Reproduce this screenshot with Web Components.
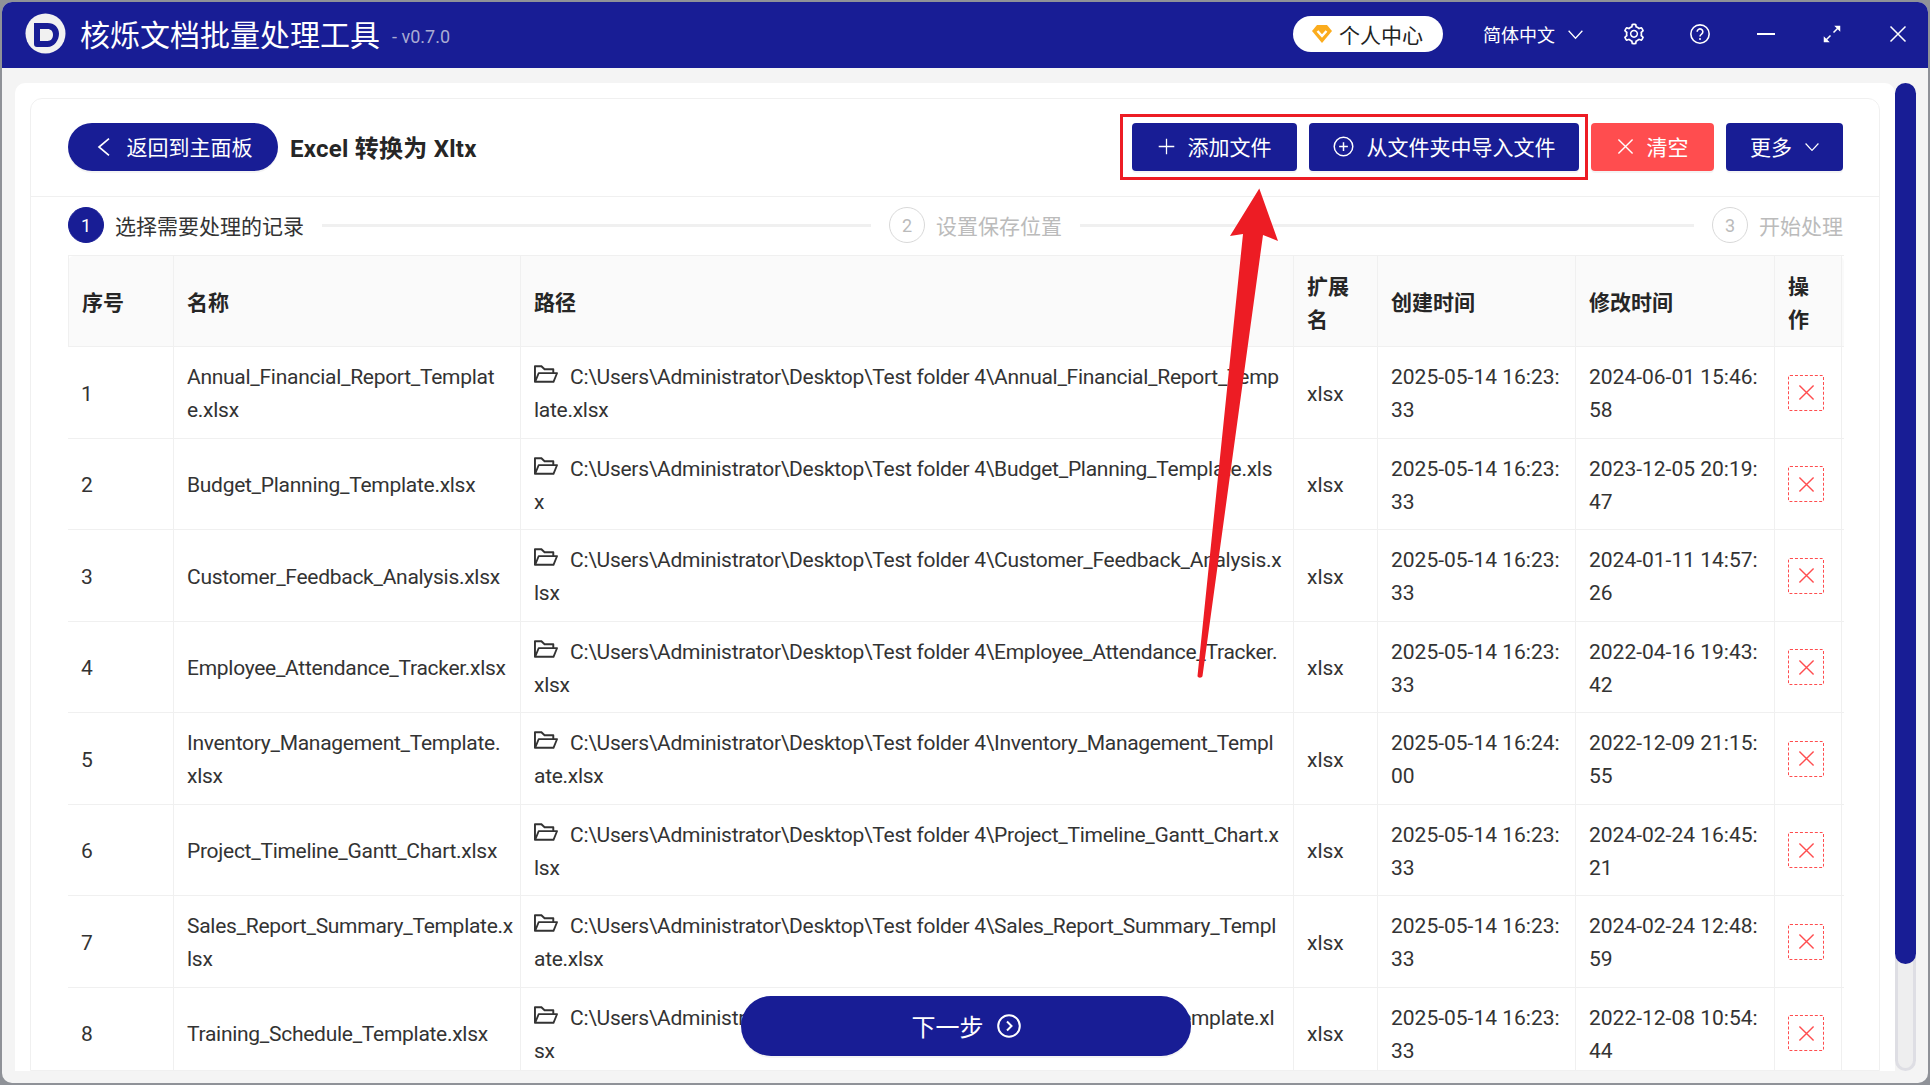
<!DOCTYPE html>
<html lang="zh">
<head>
<meta charset="utf-8">
<title>核烁文档批量处理工具</title>
<style>
  html, body { margin: 0; height: 100%; overflow: hidden; }
  body {
    background: #8f9298;
    font-family: Roboto, "Noto Sans CJK SC", sans-serif;
    color: #333;
  }
</style>
</head>
<body>
<app-window>
  <title-bar slot="top"></title-bar>
  <tool-bar></tool-bar>
  <step-bar></step-bar>
  <file-table>
    <file-row no="1" name="Annual_Financial_Report_Templat|e.xlsx" path="Annual_Financial_Report_Temp|late.xlsx" created="2025-05-14 16:23:|33" modified="2024-06-01 15:46:|58"></file-row>
    <file-row no="2" name="Budget_Planning_Template.xlsx" path="Budget_Planning_Template.xls|x" created="2025-05-14 16:23:|33" modified="2023-12-05 20:19:|47"></file-row>
    <file-row no="3" name="Customer_Feedback_Analysis.xlsx" path="Customer_Feedback_Analysis.x|lsx" created="2025-05-14 16:23:|33" modified="2024-01-11 14:57:|26"></file-row>
    <file-row no="4" name="Employee_Attendance_Tracker.xlsx" path="Employee_Attendance_Tracker.|xlsx" created="2025-05-14 16:23:|33" modified="2022-04-16 19:43:|42"></file-row>
    <file-row no="5" name="Inventory_Management_Template.|xlsx" path="Inventory_Management_Templ|ate.xlsx" created="2025-05-14 16:24:|00" modified="2022-12-09 21:15:|55"></file-row>
    <file-row no="6" name="Project_Timeline_Gantt_Chart.xlsx" path="Project_Timeline_Gantt_Chart.x|lsx" created="2025-05-14 16:23:|33" modified="2024-02-24 16:45:|21"></file-row>
    <file-row no="7" name="Sales_Report_Summary_Template.x|lsx" path="Sales_Report_Summary_Templ|ate.xlsx" created="2025-05-14 16:23:|33" modified="2024-02-24 12:48:|59"></file-row>
    <file-row no="8" name="Training_Schedule_Template.xlsx" path="Training_Schedule_Template.xl|sx" created="2025-05-14 16:23:|33" modified="2022-12-08 10:54:|44"></file-row>
  </file-table>
  <next-button slot="over"></next-button>
</app-window>
<annotation-layer></annotation-layer>

<script>
const NAVY = '#181d95';
const FONT = 'Roboto, "Noto Sans CJK SC", sans-serif';

// thin icons, all on a 24 box except the ones with their own viewBox
const ICONS = {
  left: '<path d="M18 2 6 12l12 10" fill="none" stroke="currentColor" stroke-width="2"/>',
  down: '<path d="M1 6l11 12L23 6" fill="none" stroke="currentColor" stroke-width="2"/>',
  plus: '<path d="M12 1v22M1 12h22" stroke="currentColor" stroke-width="1.8"/>',
  close: '<path d="M2 2l20 20M22 2 2 22" stroke="currentColor" stroke-width="2"/>',
  plusCircle: '<circle cx="12" cy="12" r="10.6" fill="none" stroke="currentColor" stroke-width="1.7"/><path d="M12 7v10M7 12h10" stroke="currentColor" stroke-width="1.7"/>',
  rightCircle: '<circle cx="12" cy="12" r="10.8" fill="none" stroke="currentColor" stroke-width="2"/><path d="M10 7.5l4.5 4.5-4.5 4.5" fill="none" stroke="currentColor" stroke-width="2"/>',
  help: '<circle cx="12" cy="12" r="11" fill="none" stroke="currentColor" stroke-width="1.9"/><path d="M8.6 9.3a3.4 3.4 0 1 1 5.3 2.8c-1.3.9-1.9 1.5-1.9 2.9" fill="none" stroke="currentColor" stroke-width="1.9"/><circle cx="12" cy="18" r="1.2" fill="currentColor"/>',
  minus: '<path d="M0 12h24" stroke="currentColor" stroke-width="2.4"/>',
  expand: '<path d="M14 10l8-8M10 14l-8 8" stroke="currentColor" stroke-width="2"/><path d="M15 1h8v8zM9 23H1v-8z" fill="currentColor"/>'
};

function icon(name, size) {
  return `<svg width="${size}" height="${size}" viewBox="0 0 24 24" style="display:block;flex:none" aria-hidden="true">${ICONS[name]}</svg>`;
}

class AppWindow extends HTMLElement {
  constructor() {
    super();
    this.attachShadow({ mode: 'open' }).innerHTML = `
      <style>
        :host {
          display: flex;
          flex-direction: column;
          position: absolute;
          inset: 2px;
          border-radius: 10px;
          overflow: hidden;
          background: #f4f4f4;
        }
        .main {
          flex: 1;
          min-height: 0;
          display: flex;
          padding: 15px 12px 12px 13px;
          position: relative;
        }
        .sheet {
          flex: 1;
          min-width: 0;
          background: #fff;
          border-radius: 10px 10px 0 0;
          padding: 15px 15px 0;
          overflow: hidden;
        }
        .card {
          border: 1px solid #f0f0f0;
          border-radius: 12px 12px 0 0;
          padding: 0 36px 0 37px;
          height: 100%;
          box-sizing: border-box;
        }
        .track {
          width: 21px;
          flex: none;
          background: #eeeeef;
          box-sizing: border-box;
          border: 3px solid #dedee4;
          border-top: 0;
          border-radius: 11px;
          position: relative;
        }
        .thumb {
          position: absolute;
          left: -3px;
          right: -3px;
          top: 0;
          height: 881px;
          background: ${NAVY};
          border-radius: 11px;
        }
      </style>
      <slot name="top"></slot>
      <div class="main">
        <div class="sheet"><div class="card"><slot></slot></div></div>
        <div class="track"><div class="thumb"></div></div>
        <slot name="over"></slot>
      </div>
    `;
  }
}

class TitleBar extends HTMLElement {
  constructor() {
    super();
    const gear = 'M924.8 625.7l-65.5-56c3.1-19 4.7-38.4 4.7-57.8s-1.6-38.8-4.7-57.8l65.5-56a32.03 32.03 0 0 0 9.3-35.2l-.9-2.6a443.74 443.74 0 0 0-79.7-137.9l-1.8-2.1a32.12 32.12 0 0 0-35.1-9.5l-81.3 28.9c-30-24.6-63.5-44-99.7-57.6l-15.7-85a32.05 32.05 0 0 0-25.8-25.7l-2.7-.5c-52.1-9.4-106.9-9.4-159 0l-2.7.5a32.05 32.05 0 0 0-25.8 25.7l-15.8 85.4a351.86 351.86 0 0 0-99 57.4l-81.9-29.1a32 32 0 0 0-35.1 9.5l-1.8 2.1a446.02 446.02 0 0 0-79.7 137.9l-.9 2.6c-4.5 12.5-.8 26.5 9.3 35.2l66.3 56.6c-3.1 18.8-4.6 38-4.6 57.1 0 19.2 1.5 38.4 4.6 57.1L99 625.5a32.03 32.03 0 0 0-9.3 35.2l.9 2.6c18.1 50.4 44.9 96.9 79.7 137.9l1.8 2.1a32.12 32.12 0 0 0 35.1 9.5l81.9-29.1c29.8 24.5 63.1 43.9 99 57.4l15.8 85.4a32.05 32.05 0 0 0 25.8 25.7l2.7.5a449.4 449.4 0 0 0 159 0l2.7-.5a32.05 32.05 0 0 0 25.8-25.7l15.7-85a350 350 0 0 0 99.7-57.6l81.3 28.9a32 32 0 0 0 35.1-9.5l1.8-2.1c34.8-41.1 61.6-87.5 79.7-137.9l.9-2.6c4.5-12.3.8-26.3-9.3-35zM788.3 465.9c2.5 15.1 3.8 30.6 3.8 46.1s-1.3 31-3.8 46.1l-6.6 40.1 74.7 63.9a370.03 370.03 0 0 1-42.6 73.6L721 702.8l-31.4 25.8c-23.9 19.6-50.5 35-79.3 45.8l-38.1 14.3-17.9 97a377.5 377.5 0 0 1-85 0l-17.9-97.2-37.8-14.5c-28.5-10.8-55-26.2-78.7-45.7l-31.4-25.9-93.4 33.2c-17-22.9-31.2-47.6-42.6-73.6l75.5-64.5-6.5-40c-2.4-14.9-3.7-30.3-3.7-45.5 0-15.3 1.2-30.6 3.7-45.5l6.5-40-75.5-64.5c11.3-26.1 25.6-50.7 42.6-73.6l93.4 33.2 31.4-25.9c23.7-19.5 50.2-34.9 78.7-45.7l37.9-14.3 17.9-97.2c28.1-3.2 56.8-3.2 85 0l17.9 97 38.1 14.3c28.7 10.8 55.4 26.2 79.3 45.8l31.4 25.8 92.8-32.9c17 22.9 31.2 47.6 42.6 73.6L781.8 426l6.5 39.9zM512 326c-97.2 0-176 78.8-176 176s78.8 176 176 176 176-78.8 176-176-78.8-176-176-176zm79.2 255.2A111.6 111.6 0 0 1 512 614c-29.9 0-58-11.7-79.2-32.8A111.6 111.6 0 0 1 400 502c0-29.9 11.7-58 32.8-79.2C454 401.6 482.1 390 512 390c29.9 0 58 11.6 79.2 32.8A111.6 111.6 0 0 1 624 502c0 29.9-11.7 58-32.8 79.2z';
    this.attachShadow({ mode: 'open' }).innerHTML = `
      <style>
        :host {
          display: flex;
          align-items: center;
          flex: none;
          height: 66px;
          background: ${NAVY};
          color: #fff;
          padding: 0 20px 0 23px;
          font-family: ${FONT};
        }
        .logo { display: block; flex: none; margin-top: -3px; }
        h1 { margin: 1px 0 0 14px; font-size: 30px; font-weight: 400; line-height: 1; white-space: nowrap; }
        .ver { margin-left: 12px; font-size: 18px; color: #a9abd3; white-space: nowrap; position: relative; top: 1px; }
        .space { flex: 1; }
        .pill {
          display: flex;
          align-items: center;
          gap: 7px;
          width: 150px;
          height: 36px;
          box-sizing: border-box;
          padding-left: 19px;
          margin-top: -2px;
          background: #fff;
          border-radius: 18px;
          color: #222;
          font-size: 21px;
        }
        .lang {
          display: flex;
          align-items: center;
          gap: 13px;
          margin-left: 40px;
          margin-right: 41px;
          margin-top: -2px;
          font-size: 18px;
        }
        .icons { display: flex; align-items: center; gap: 46px; margin-top: -2px; }
        .icons div { width: 20px; height: 24px; display: flex; align-items: center; justify-content: center; }
      </style>
      <svg class="logo" width="41" height="41" viewBox="0 0 41 41" aria-hidden="true">
        <circle cx="20.5" cy="20.5" r="20" fill="#f1f1f1"/>
        <path fill-rule="evenodd" d="M9 10h13.5c7 0 11.500 4.700 11.500 10.800S29.500 34 22.500 34H12c-2 0-3-1-3-3zM15 16v12h7.500c3.500 0 5.500-2.800 5.500-6.200S26 16 22.500 16z" fill="${NAVY}"/>
      </svg>
      <h1>核烁文档批量处理工具</h1>
      <span class="ver">- v0.7.0</span>
      <span class="space"></span>
      <div class="pill">
        <svg width="20" height="18" viewBox="0 0 20 18" aria-hidden="true">
          <path d="M5 0h10l5 6-10 12L0 6z" fill="#fbac1d"/>
          <path d="M5.500 6l4.500 5 4.500-5" fill="none" stroke="#fff" stroke-width="2.400"/>
        </svg>
        <span>个人中心</span>
      </div>
      <div class="lang"><span>简体中文</span>${icon('down', 15)}</div>
      <div class="icons">
        <div><svg width="24" height="24" viewBox="0 0 1024 1024" style="display:block;flex:none" fill="currentColor" aria-hidden="true"><path d="${gear}"/></svg></div>
        <div>${icon('help', 20)}</div>
        <div>${icon('minus', 18)}</div>
        <div>${icon('expand', 18)}</div>
        <div>${icon('close', 18)}</div>
      </div>
    `;
  }
}

class ToolBar extends HTMLElement {
  constructor() {
    super();
    this.attachShadow({ mode: 'open' }).innerHTML = `
      <style>
        :host {
          display: flex;
          align-items: center;
          gap: 12px;
          height: 98px;
          box-sizing: border-box;
          margin: 0 -36px 0 -37px;
          padding: 0 36px 2px 37px;
          border-bottom: 1px solid #f0f0f0;
          font-family: ${FONT};
        }
        h2 {
          margin: 0 0 1px;
          font-size: 24px;
          font-weight: 700;
          letter-spacing: .25px;
          color: #262626;
          white-space: nowrap;
        }
        .space { flex: 1; }
      </style>
      <app-button pill style="width:210px"><span slot="icon">${icon('left', 20)}</span>返回到主面板</app-button>
      <h2>Excel 转换为 Xltx</h2>
      <span class="space"></span>
      <app-button style="width:165px"><span slot="icon">${icon('plus', 17)}</span>添加文件</app-button>
      <app-button style="width:270px"><span slot="icon">${icon('plusCircle', 21)}</span>从文件夹中导入文件</app-button>
      <app-button danger style="width:123px"><span slot="icon">${icon('close', 17)}</span>清空</app-button>
      <app-button style="width:117px">更多<span slot="after">${icon('down', 14)}</span></app-button>
    `;
  }
}

class AppButton extends HTMLElement {
  constructor() {
    super();
    this.attachShadow({ mode: 'open' }).innerHTML = `
      <style>
        :host {
          display: flex;
          align-items: center;
          justify-content: center;
          gap: 13px;
          flex: none;
          height: 48px;
          box-sizing: border-box;
          background: ${NAVY};
          color: #fff;
          border-radius: 4px;
          font-size: 21px;
          white-space: nowrap;
          box-shadow: 0 2px 0 rgba(0,0,0,.045);
        }
        :host([pill]) { border-radius: 24px; margin-right: 0; }
        :host([danger]) { background: #ff4d4f; }
        ::slotted(span) { display: block; }
        .label { padding-bottom: 2px; }
      </style>
      <slot name="icon"></slot><span class="label"><slot></slot></span><slot name="after"></slot>
    `;
  }
}

class StepBar extends HTMLElement {
  constructor() {
    super();
    this.attachShadow({ mode: 'open' }).innerHTML = `
      <style>
        :host {
          display: flex;
          align-items: center;
          height: 58px;
          box-sizing: border-box;
          padding: 10px 0 12px;
          font-family: ${FONT};
          font-size: 21px;
          color: #bbb;
          white-space: nowrap;
        }
        .dot {
          width: 36px;
          height: 36px;
          box-sizing: border-box;
          border: 1.500px solid #d9d9d9;
          border-radius: 50%;
          display: flex;
          align-items: center;
          justify-content: center;
          font-size: 18px;
          margin-right: 11px;
          flex: none;
        }
        .on .dot { background: ${NAVY}; border-color: ${NAVY}; color: #fff; }
        .step { display: flex; align-items: center; flex: none; }
        .on { color: #333; }
        .line { height: 3px; background: #f0f0f0; margin: 0 18px; }
      </style>
      <div class="step on"><span class="dot">1</span>选择需要处理的记录</div>
      <div class="line" style="flex:548"></div>
      <div class="step"><span class="dot">2</span>设置保存位置</div>
      <div class="line" style="flex:613"></div>
      <div class="step"><span class="dot">3</span>开始处理</div>
    `;
  }
}

const COLUMNS = '106px 347px 773px 84px 198px 199px 67px';

class FileTable extends HTMLElement {
  constructor() {
    super();
    this.attachShadow({ mode: 'open' }).innerHTML = `
      <style>
        :host {
          display: block;
          margin-right: -1px;
          border-top: 1px solid #f0f0f0;
          font-family: ${FONT};
          font-size: 21px;
          line-height: 33px;
          color: #333;
        }
        .head {
          display: grid;
          grid-template-columns: ${COLUMNS};
          height: 91px;
          background: #fafafa;
          border-bottom: 1px solid #f0f0f0;
          box-sizing: border-box;
          font-weight: 700;
          color: #262626;
          border-radius: 6px 6px 0 0;
        }
        .head div {
          display: flex;
          align-items: center;
          padding: 5px 13px 0;
          box-sizing: border-box;
          border-right: 1px solid #f0f0f0;
        }
        .head div:first-child { border-left: 1px solid #f0f0f0; }
      </style>
      <div class="head">
        <div>序号</div><div>名称</div><div>路径</div><div>扩展名</div><div>创建时间</div><div>修改时间</div><div>操作</div>
      </div>
      <slot></slot>
    `;
  }
}

class FileRow extends HTMLElement {
  constructor() {
    super();
    this.attachShadow({ mode: 'open' });
  }

  connectedCallback() {
    // | marks where the reference wraps the long cell
    const text = (key) => this.getAttribute(key).split('|').join('<br>');
    const folder = 'C:\\Users\\Administrator\\Desktop\\Test folder 4\\';
    this.shadowRoot.innerHTML = `
      <style>
        :host {
          display: grid;
          grid-template-columns: ${COLUMNS};
          height: 91.500px;
          box-sizing: border-box;
          border-bottom: 1px solid #f0f0f0;
        }
        .c {
          display: flex;
          align-items: center;
          padding: 4px 13px 0;
          box-sizing: border-box;
          border-right: 1px solid #f0f0f0;
          white-space: nowrap;
          min-width: 0;
        }
        .c:first-child { border-left: 1px solid #f0f0f0; }
        .tight { letter-spacing: -.28px; }
        .path svg { display: inline-block; vertical-align: -2px; margin-right: 12px; }
        .del {
          width: 36px;
          height: 36px;
          box-sizing: border-box;
          border: 1px dashed #ff4d4f;
          border-radius: 2px;
          color: #ff4d4f;
          display: flex;
          align-items: center;
          justify-content: center;
        }
        .op { padding-top: 1px; }
      </style>
      <div class="c">${this.getAttribute('no')}</div>
      <div class="c tight"><span>${text('name')}</span></div>
      <div class="c path tight"><span><svg width="24" height="24" viewBox="64 64 896 896" fill="#333" aria-hidden="true"><path d="M928 444H820V330.400c0-17.700-14.300-32-32-32H473L355.700 186.200a8.150 8.150 0 0 0-5.500-2.200H96c-17.700 0-32 14.300-32 32v592c0 17.700 14.300 32 32 32h698c13 0 24.800-7.900 29.700-20l134-332c1.500-3.800 2.300-7.900 2.300-12 0-17.700-14.300-32-32-32zM136 256h188.500l119.600 114.400H748V444H238c-13 0-24.800 7.900-29.700 20L136 643.200V256zm635.300 512H159l103.300-256h612.400L771.300 768z"/></svg>${folder}${text('path')}</span></div>
      <div class="c">xlsx</div>
      <div class="c"><span>${text('created')}</span></div>
      <div class="c"><span>${text('modified')}</span></div>
      <div class="c op"><span class="del">${icon('close', 17)}</span></div>
    `;
  }
}

class NextButton extends HTMLElement {
  constructor() {
    super();
    this.attachShadow({ mode: 'open' }).innerHTML = `
      <style>
        :host {
          position: absolute;
          left: 739px;
          bottom: 27px;
          width: 450px;
          height: 60px;
          display: flex;
          align-items: center;
          justify-content: center;
          gap: 13px;
          background: ${NAVY};
          color: #fff;
          border-radius: 30px;
          font-family: ${FONT};
          font-size: 24px;
          box-shadow: 0 2px 0 rgba(0,0,0,.045);
        }
        span { padding-bottom: 2px; }
      </style>
      <span>下一步</span>${icon('rightCircle', 24)}
    `;
  }
}

class AnnotationLayer extends HTMLElement {
  constructor() {
    super();
    this.attachShadow({ mode: 'open' }).innerHTML = `
      <style>
        :host { position: absolute; left: 0; top: 0; width: 1930px; height: 1085px; pointer-events: none; }
        svg { display: block; }
      </style>
      <svg width="1930" height="1085" viewBox="0 0 1930 1085" aria-hidden="true">
        <rect x="1121.500" y="115.500" width="465" height="63" fill="none" stroke="#ed1c24" stroke-width="3"/>
        <path d="M1259.300 188.600 1278 241l-15-6-60.500 441c-.4 2.200-4.800 2.200-5 0L1243 234l-13 2z" fill="#ed1c24"/>
      </svg>
    `;
  }
}

customElements.define('app-button', AppButton);
customElements.define('app-window', AppWindow);
customElements.define('title-bar', TitleBar);
customElements.define('tool-bar', ToolBar);
customElements.define('step-bar', StepBar);
customElements.define('file-table', FileTable);
customElements.define('file-row', FileRow);
customElements.define('next-button', NextButton);
customElements.define('annotation-layer', AnnotationLayer);
</script>
</body>
</html>
